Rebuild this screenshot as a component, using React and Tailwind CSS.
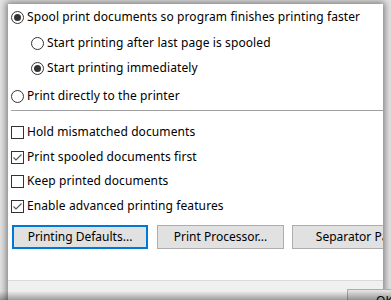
import React from "react";

function Radio({ checked }) {
  return (
    <svg width="13" height="13" viewBox="0 0 13 13" className="shrink-0">
      <circle cx="6.5" cy="6.5" r="6" fill="#fff" stroke="#333" strokeWidth="1" />
      {checked && <circle cx="6.5" cy="6.5" r="3.5" fill="#333" />}
    </svg>
  );
}

function Check({ checked }) {
  return (
    <svg width="13" height="13" viewBox="0 0 13 13" className="shrink-0">
      <rect x="0.5" y="0.5" width="12" height="12" fill="#fff" stroke="#333" strokeWidth="1" />
      {checked && (
        <path d="M2.5 6.5 L5 9 L10.5 3.5" fill="none" stroke="#555" strokeWidth="1.1" />
      )}
    </svg>
  );
}

function Row({ icon, label, className }) {
  return (
    <div className={"flex items-center gap-[3px] h-[20px] " + (className || "")}>
      {icon}
      <span className="whitespace-nowrap">{label}</span>
    </div>
  );
}

export default function App() {
  return (
    <div
      className="relative w-[391px] h-[300px] overflow-hidden bg-[#e4e4e4] pt-[4px] pl-[8px] text-[12px] text-black tracking-[0.1px]"
      style={{ fontFamily: '"Noto Sans", "Open Sans", sans-serif' }}
    >
      <div className="w-[375px] h-[320px] bg-[#f0f0f0] shadow-[0_0_7px_2px_rgba(0,0,0,0.45)] flex flex-col">
        <div className="h-[277px] shrink-0 bg-white border-b border-[#d9d9d9] overflow-hidden flex flex-col pl-[3px]">
          <Row className="mt-[3px]" icon={<Radio checked />} label="Spool print documents so program finishes printing faster" />
          <Row className="mt-[6px] pl-[20px]" icon={<Radio />} label="Start printing after last page is spooled" />
          <Row className="mt-[5px] pl-[20px]" icon={<Radio checked />} label="Start printing immediately" />
          <Row className="mt-[8px]" icon={<Radio />} label="Print directly to the printer" />
          <div className="mt-[4px] h-px bg-[#a0a0a0] shrink-0" />
          <Row className="mt-[11px]" icon={<Check />} label="Hold mismatched documents" />
          <Row className="mt-[5px]" icon={<Check checked />} label="Print spooled documents first" />
          <Row className="mt-[4px]" icon={<Check />} label="Keep printed documents" />
          <Row className="mt-[5px]" icon={<Check checked />} label="Enable advanced printing features" />
          <div className="mt-[9px] flex pl-[1px] gap-[9px] tracking-normal">
            <button className="w-[136px] h-[24px] shrink-0 bg-[#e1e1e1] border-2 border-[#0078d7] flex items-center justify-center">
              Printing Defaults...
            </button>
            <button className="w-[127px] h-[24px] shrink-0 bg-[#e1e1e1] border border-[#adadad] flex items-center justify-center">
              Print Processor...
            </button>
            <button className="w-[144px] h-[24px] shrink-0 bg-[#e1e1e1] border border-[#adadad] flex items-center justify-center -ml-[1px]">
              Separator Page...
            </button>
          </div>
        </div>
        <div className="flex pl-[339px] pt-[8px] shrink-0">
          <button className="w-[75px] h-[23px] shrink-0 bg-[#e1e1e1] border border-[#adadad] flex items-center justify-center">
            OK
          </button>
        </div>
      </div>
      <div className="pointer-events-none absolute left-0 right-0 bottom-0 h-[9px] bg-gradient-to-b from-transparent to-[rgba(0,0,0,0.35)]" />
    </div>
  );
}
